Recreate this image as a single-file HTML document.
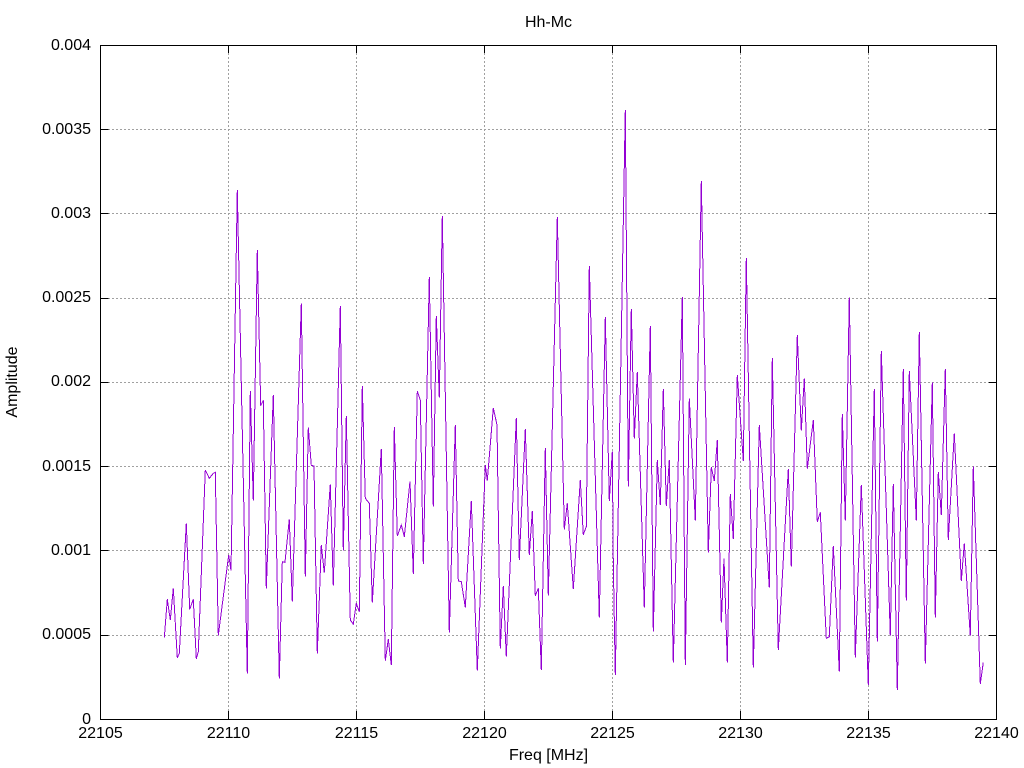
<!DOCTYPE html>
<html><head><meta charset="utf-8"><style>
html,body{margin:0;padding:0;background:#fff}
svg{display:block}
text{font-family:"Liberation Sans",sans-serif;font-size:16px;fill:#000}
</style></head><body>
<svg width="1024" height="768" viewBox="0 0 1024 768" xmlns="http://www.w3.org/2000/svg">
<rect width="1024" height="768" fill="#fff"/>
<g stroke="#a0a0a0" stroke-width="1" stroke-dasharray="2 2" shape-rendering="crispEdges" fill="none">
<path d="M108 129.5H988M108 213.5H988M108 298.5H988M108 382.5H988M108 466.5H988M108 550.5H988M108 635.5H988"/>
<path d="M228.5 53V711M356.5 53V711M484.5 53V711M612.5 53V711M740.5 53V711M868.5 53V711"/>
</g>
<g stroke="#000" stroke-width="1" shape-rendering="crispEdges" fill="none">
<path d="M100.5 129.5h8M100.5 213.5h8M100.5 298.5h8M100.5 382.5h8M100.5 466.5h8M100.5 550.5h8M100.5 635.5h8"/>
<path d="M996.5 129.5h-8M996.5 213.5h-8M996.5 298.5h-8M996.5 382.5h-8M996.5 466.5h-8M996.5 550.5h-8M996.5 635.5h-8"/>
<path d="M228.5 45v8M356.5 45v8M484.5 45v8M612.5 45v8M740.5 45v8M868.5 45v8"/>
<path d="M228.5 719v-8M356.5 719v-8M484.5 719v-8M612.5 719v-8M740.5 719v-8M868.5 719v-8"/>
</g>
<polyline fill="none" stroke="#9400d3" stroke-width="1" shape-rendering="crispEdges" points="164.3,637.7 167.3,599.3 170.3,620 173.3,588.3 177.3,657.7 179.3,653.3 186.3,523.3 189.7,609.3 193.3,599.3 196.3,658.7 198.3,651.7 205.3,470 209.3,478.3 213.3,473.3 215.3,472.3 218.3,635.3 228.7,555 231,570.7 237.3,190 247.3,673.3 250.3,391 253.3,500.7 257.3,250 260.7,405.7 263.3,400.3 266.3,588.7 273.3,395 279.3,678.7 282.3,561.7 285,562.3 289.3,519.3 292.3,601.7 301.3,303.3 305.3,576.7 308.3,427.3 311.3,465.3 314,466 317.3,653.3 321.3,545 324.3,572.7 330.3,484.3 333.3,585.7 340.3,306 343.3,550.7 346.3,416 350.3,620 353.3,624.3 356.3,603.3 359.3,611.7 362.3,386 365.3,498.3 369.3,503.3 372.3,602.7 381.3,449 385.3,660.7 388.3,639.3 391.3,665 394.3,427 397.3,536 401.3,525 404.3,536.7 410,481.3 413.3,574 417.3,391 420.3,400 423.3,564 429.3,277 433.3,506.7 436.3,316 439.3,397.7 442.3,216 449.3,632.7 455.3,425 458.3,581 461.3,581.7 465.3,607.3 471.3,501 477.3,670.7 485.3,465 487.3,480.7 493.3,408 497,425 500.3,648.7 503.3,586 506.3,656.7 516.3,418 519.3,560 525.3,429 529.3,555 532.3,511 535.3,595.7 538.3,588.3 541.3,670 545.3,448 548.3,595.7 557.3,217 564.3,529.3 567.3,503.3 573.3,589 580.3,480 583.3,534.7 586.3,526.7 589.3,266 599.3,617.7 605.3,317 609.3,501 612.3,451.7 613.3,563 615.3,675 625.3,110 628.3,486.7 631.3,309 634.3,438.7 637.3,372 644.3,607.7 650.3,326 653.3,631.7 657.3,460 660.3,505 663.3,389 666.3,506 669.3,460 673.3,662.7 682.3,297 685.3,665 689.3,398.3 695.3,520.7 701.3,181 708.3,552.7 711.3,467.3 714.3,481 717.3,440 721.3,622.7 724,558.3 727.3,662.7 730.3,494 733.3,539 737.3,375 743.3,461 746.3,258 753.3,667.7 759.3,425 769.3,587.7 772.3,358 778.3,650 788.3,469 791.3,566.7 797.3,335 801.3,430.7 804.3,378.3 807.3,468.7 813.3,420 817.3,521.7 820.3,512.3 826.3,638.3 829.3,636.7 833.3,546 839.3,671.7 842.3,414 845.3,520.7 849.3,297.3 855.3,657.3 861.3,485 868.3,685 874.3,389 877.3,641.7 881.3,351 890.3,635.7 893.3,484 897.3,690 903.3,369 906.3,600.7 909.3,371 916.3,520.7 919.3,332 925.3,663.3 932.3,382.7 935.3,617.7 938.3,472 941.3,515 945.3,369 948.3,540 954.3,433.3 961.3,581 964.3,543.3 970.3,635.7 973.3,466.7 980.3,684 983.3,662.3"/>
<rect x="100.5" y="45.5" width="896" height="674" fill="none" stroke="#000" stroke-width="1" shape-rendering="crispEdges"/>
<g text-anchor="end">
<text x="91" y="724">0</text>
<text x="91" y="639">0.0005</text>
<text x="91" y="555">0.001</text>
<text x="91" y="471">0.0015</text>
<text x="91" y="386">0.002</text>
<text x="91" y="302">0.0025</text>
<text x="91" y="218">0.003</text>
<text x="91" y="134">0.0035</text>
<text x="91" y="50">0.004</text>
</g>
<g text-anchor="middle">
<text x="100.5" y="738">22105</text>
<text x="228.5" y="738">22110</text>
<text x="356.5" y="738">22115</text>
<text x="484.5" y="738">22120</text>
<text x="612.5" y="738">22125</text>
<text x="740.5" y="738">22130</text>
<text x="868.5" y="738">22135</text>
<text x="996.5" y="738">22140</text>
<text x="548.5" y="760">Freq [MHz]</text>
<text x="548.5" y="27">Hh-Mc</text>
<text transform="translate(17,382) rotate(-90)">Amplitude</text>
</g>
</svg>
</body></html>
